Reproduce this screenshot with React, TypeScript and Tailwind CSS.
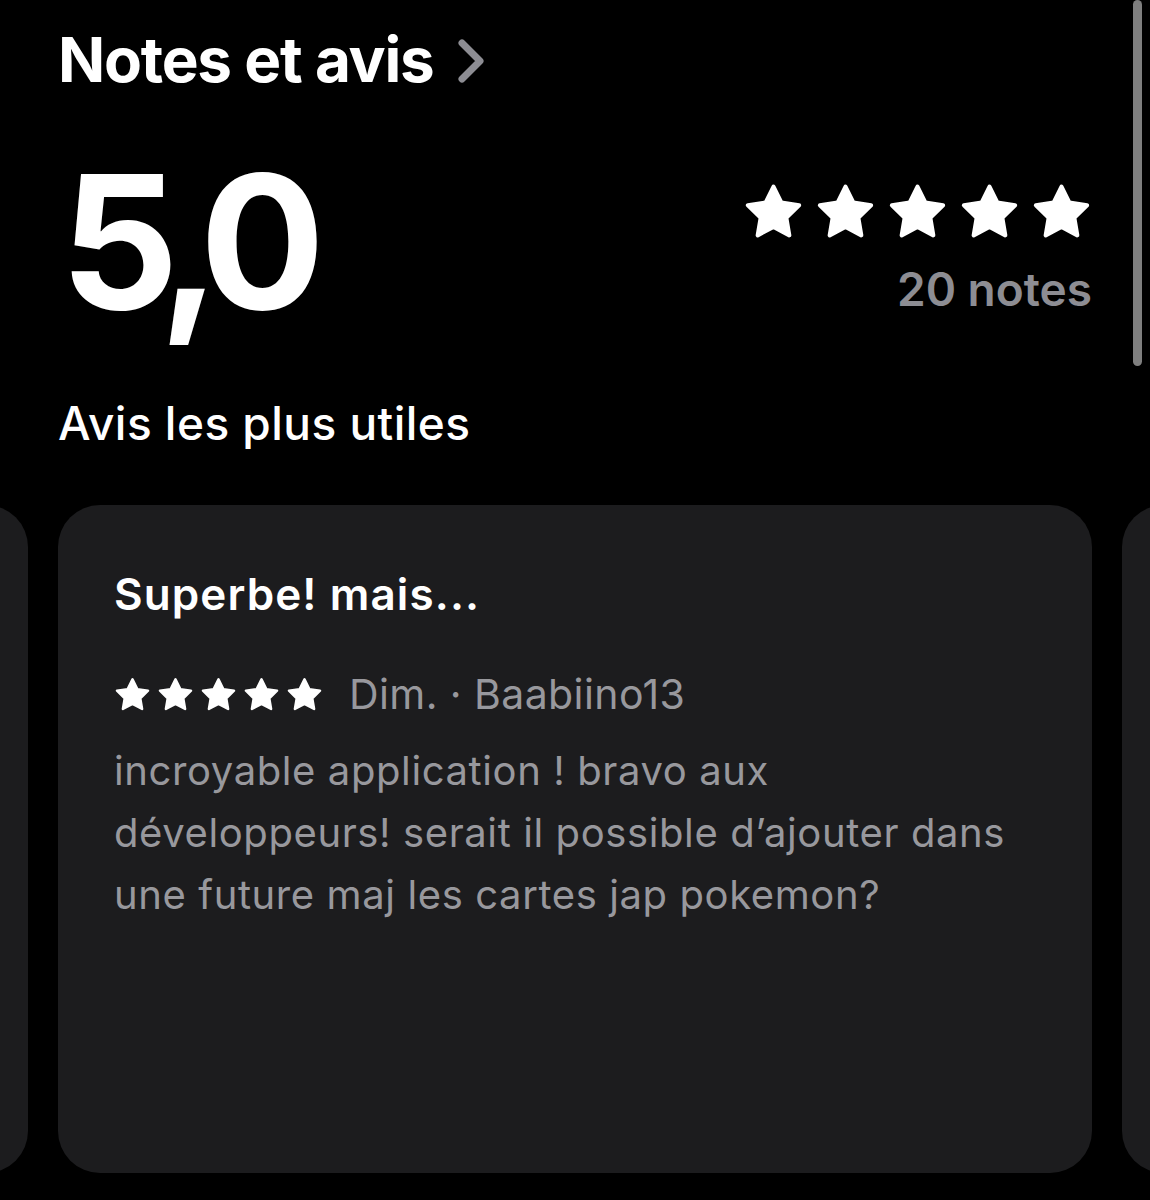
import { ReactNode } from 'react';

// rounded five point star, like the App Store one
const starPoints = (() => {
	const pts: string[] = [];
	for (let i = 0; i < 10; i++) {
		const r = i % 2 === 0 ? 10.6 : 5.3;
		const a = (Math.PI / 5) * i - Math.PI / 2;
		pts.push(`${(12 + r * Math.cos(a)).toFixed(2)},${(12.8 + r * Math.sin(a)).toFixed(2)}`);
	}
	return pts.join(' ');
})();

function Star({ className }: { className: string }): JSX.Element {
	return (
		<svg viewBox="0 0 24 24" className={className}>
			<polygon
				points={starPoints}
				fill="currentColor"
				stroke="currentColor"
				strokeWidth={1.6}
				strokeLinejoin="round"
			/>
		</svg>
	);
}

function Stars({ size, gap }: { size: string; gap: string }): JSX.Element {
	return (
		<div className={`flex ${gap} text-white`}>
			{[0, 1, 2, 3, 4].map((i) => (
				<Star key={i} className={size} />
			))}
		</div>
	);
}

function Card({ children }: { children?: ReactNode }): JSX.Element {
	return (
		<div className="w-[1034px] h-[668px] shrink-0 rounded-[42px] bg-[#1c1c1e]">
			{children}
		</div>
	);
}

function App(): JSX.Element {
	return (
		<div className="relative w-[1150px] h-[1200px] overflow-hidden bg-black font-['Inter','Noto_Sans',sans-serif] antialiased">
			{/* scroll indicator */}
			<div className="absolute top-0 right-[8px] w-[9px] h-[366px] rounded-full bg-[#7f7f7f]" />

			<div className="px-[58px] pt-[29px]">
				<div className="flex items-center gap-[23px]">
					<h1 className="text-[62px] leading-[62px] font-bold tracking-[-0.02em] text-white">
						Notes et avis
					</h1>
					<svg viewBox="0 0 30 44" className="w-[30px] h-[44px] mt-[2px]">
						<path
							d="M5 4 L23 22 L5 40"
							fill="none"
							stroke="#8d8d93"
							strokeWidth={7}
							strokeLinecap="round"
							strokeLinejoin="round"
						/>
					</svg>
				</div>

				<div className="mt-[58px] flex justify-between items-start">
					<div className="text-[186px] leading-[186px] font-bold tracking-[-0.085em] text-white pl-[2px]">
						5,0
					</div>
					<div className="flex flex-col items-end pt-[32px]">
						<Stars size="w-[61px] h-[61px]" gap="gap-[11px]" />
						<div className="mt-[24px] text-[46px] leading-[46px] font-semibold text-[#8d8d93]">
							20 notes
						</div>
					</div>
				</div>

				<h2 className="mt-[65px] text-[46px] leading-[46px] font-medium tracking-[0.01em] text-white">
					Avis les plus utiles
				</h2>
			</div>

			<div className="mt-[59px] flex justify-center gap-[30px]">
				<Card />
				<Card>
					<div className="pl-[56px] pr-[40px] pt-[65px]">
						<h3 className="text-[44px] leading-[48px] font-semibold tracking-[0.025em] text-white">
							Superbe! mais...
						</h3>
						<div className="mt-[53px] flex items-center gap-[26px]">
							<Stars size="w-[37px] h-[37px]" gap="gap-[6px]" />
							<span className="text-[41px] leading-[46px] tracking-[0.01em] text-[#98989d]">
								Dim. · Baabiino13
							</span>
						</div>
						<p className="mt-[23px] w-[940px] text-[40px] leading-[62px] tracking-[0.015em] text-[#98989d]">
							incroyable application ! bravo aux développeurs! serait il possible
							d’ajouter dans une future maj les cartes jap pokemon?
						</p>
					</div>
				</Card>
				<Card />
			</div>
		</div>
	);
}

export default App;
